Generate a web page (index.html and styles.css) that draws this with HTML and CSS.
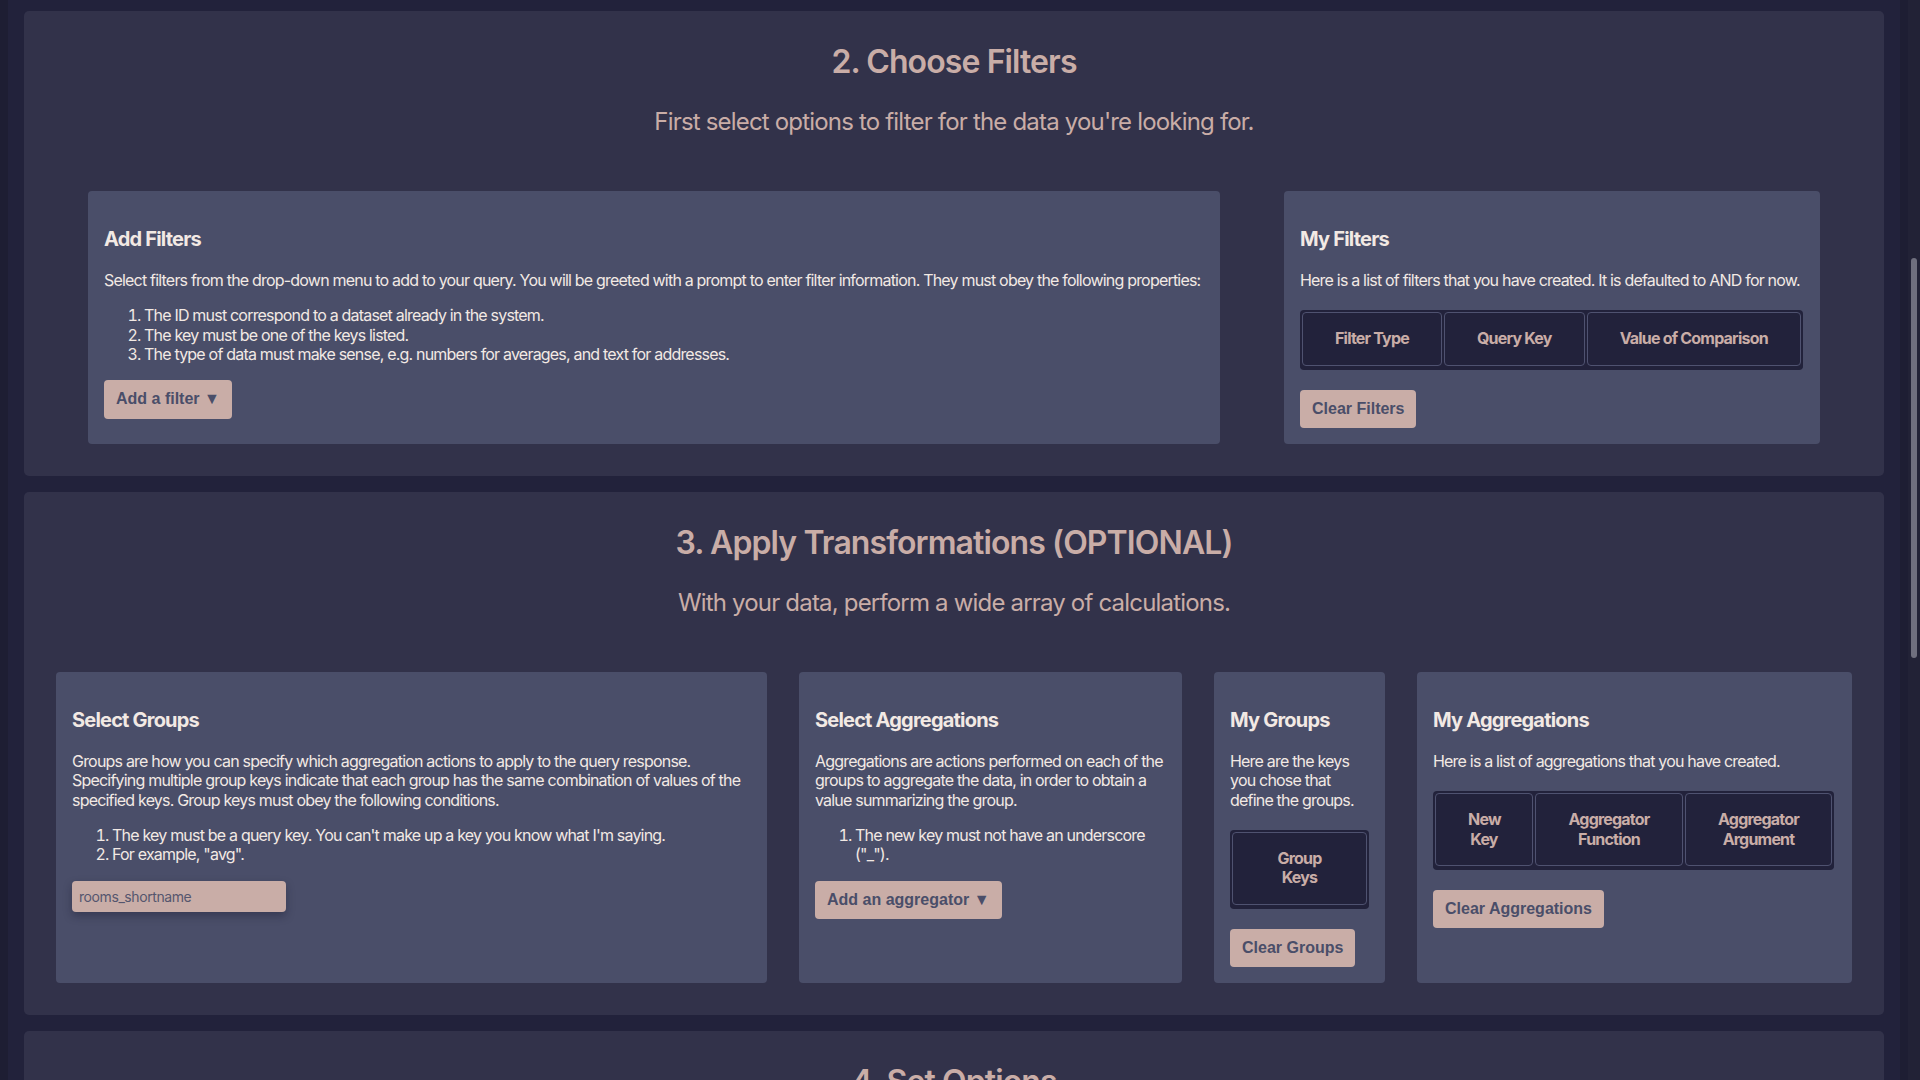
FILE: index.html
```html
<!DOCTYPE html>
<html lang="en">
<head>
<meta charset="utf-8">
<title>Query Builder</title>
<link rel="stylesheet" href="styles.css">
</head>
<body>
<div class="page">
  <section class="step">
    <h2 class="step-title">2. Choose Filters</h2>
    <p class="step-sub">First select options to filter for the data you're looking for.</p>
    <div class="row row-filters">
      <div class="card card-addfilters">
        <h3>Add Filters</h3>
        <p class="one-line">Select filters from the drop-down menu to add to your query. You will be greeted with a prompt to enter filter information. They must obey the following properties:</p>
        <ol>
          <li>The ID must correspond to a dataset already in the system.</li>
          <li>The key must be one of the keys listed.</li>
          <li>The type of data must make sense, e.g. numbers for averages, and text for addresses.</li>
        </ol>
        <button class="btn">Add a filter ▼</button>
      </div>
      <div class="card card-myfilters">
        <h3>My Filters</h3>
        <p class="one-line">Here is a list of filters that you have created. It is defaulted to AND for now.</p>
        <table class="tbl tbl-nowrap">
          <tr><th>Filter Type</th><th>Query Key</th><th>Value of Comparison</th></tr>
        </table>
        <button class="btn">Clear Filters</button>
      </div>
    </div>
  </section>

  <section class="step">
    <h2 class="step-title">3. Apply Transformations (OPTIONAL)</h2>
    <p class="step-sub">With your data, perform a wide array of calculations.</p>
    <div class="row row-trans">
      <div class="card card-groups">
        <h3>Select Groups</h3>
        <p>Groups are how you can specify which aggregation actions to apply to the query response. Specifying multiple group keys indicate that each group has the same combination of values of the specified keys. Group keys must obey the following conditions.</p>
        <ol>
          <li>The key must be a query key. You can't make up a key you know what I'm saying.</li>
          <li>For example, "avg".</li>
        </ol>
        <input class="field" type="text" placeholder="rooms_shortname">
      </div>
      <div class="card card-aggs">
        <h3>Select Aggregations</h3>
        <p>Aggregations are actions performed on each of the groups to aggregate the data, in order to obtain a value summarizing the group.</p>
        <ol>
          <li>The new key must not have an underscore ("_").</li>
        </ol>
        <button class="btn">Add an aggregator ▼</button>
      </div>
      <div class="card card-mygroups">
        <h3>My Groups</h3>
        <p>Here are the keys you chose that define the groups.</p>
        <table class="tbl">
          <tr><th>Group Keys</th></tr>
        </table>
        <button class="btn">Clear Groups</button>
      </div>
      <div class="card card-myaggs">
        <h3>My Aggregations</h3>
        <p>Here is a list of aggregations that you have created.</p>
        <table class="tbl tbl-fixed">
          <tr><th class="c-newkey">New Key</th><th class="c-afunc">Aggregator Function</th><th class="c-aarg">Aggregator Argument</th></tr>
        </table>
        <button class="btn">Clear Aggregations</button>
      </div>
    </div>
  </section>

  <section class="step">
    <h2 class="step-title">4. Set Options</h2>
  </section>
</div>
<div class="scrollbar"><div class="thumb"></div></div>
</body>
</html>
```
FILE: styles.css
```css
html {
  background: #1e1e33;
}
body {
  margin: 0;
  height: 1080px;
  overflow: hidden;
  display: flex;
  font-family: "Inter", "Noto Sans", sans-serif;
  color: #f2e9e4;
  font-size: 16px;
  line-height: 1.21;
}
.page {
  flex: 1;
  margin: 0 8px;
  background: #22223b;
  padding: 11px 16px 0;
  overflow: hidden;
}
.scrollbar {
  width: 12px;
  background: #222236;
  display: flex;
  flex-direction: column;
}
.thumb {
  margin: 258px 0 0 3px;
  width: 6px;
  height: 400px;
  border-radius: 3px;
  background: #6f6f7e;
}
.step {
  background: #32324a;
  border-radius: 5px;
  padding: 32px 32px 32px;
  margin-bottom: 16px;
}
.step-title {
  margin: 0;
  text-align: center;
  font-size: 32px;
  font-weight: 600;
  color: #c9ada7;
  letter-spacing: -0.028em;
}
.step-sub {
  margin: 25px 0 55px;
  text-align: center;
  font-size: 24px;
  color: #c9ada7;
  letter-spacing: -0.034em;
}
.row {
  display: flex;
  align-items: stretch;
}
.row-filters {
  justify-content: space-around;
}
.row-trans {
  gap: 32px;
}
.card {
  background: #4a4e69;
  border-radius: 4px;
  padding: 16px;
  box-sizing: border-box;
  letter-spacing: -0.05em;
}
.card h3 {
  margin: 20px 0;
  font-size: 20px;
  font-weight: 700;
  color: #f2e9e4;
}
.card p {
  margin: 16px 0;
}
.card p.one-line {
  white-space: nowrap;
}
.card ol {
  margin: 16px 0;
  padding-left: 40px;
}
.card-addfilters { width: 1132px; }
.card-myfilters { width: 536px; }
.card-groups { width: 711px; }
.card-aggs { width: 383px; }
.card-mygroups { width: 171px; }
.card-myaggs { width: 435px; }

.btn {
  display: block;
  border: none;
  border-radius: 4px;
  background: #c9ada7;
  color: #4a4e69;
  font-family: "Liberation Sans", Arial, sans-serif;
  font-weight: 700;
  font-size: 16px;
  line-height: 18.4px;
  padding: 10px 12px;
  letter-spacing: 0;
}
.field {
  display: block;
  width: 214px;
  height: 31px;
  box-sizing: border-box;
  border: none;
  border-radius: 4px;
  background: #c9ada7;
  padding: 0 7px;
  font-family: "Inter", sans-serif;
  font-size: 14px;
  letter-spacing: -0.03em;
  box-shadow: 0 4px 8px rgba(20, 20, 40, 0.35);
}
.field::placeholder {
  color: #55566e;
}
.tbl {
  background: #22223b;
  border-radius: 4px;
  border-spacing: 2px;
  border-bottom: 2px solid #22223b;
  margin: 20px 0;
}
.tbl th {
  border: 1px solid #4f5270;
  border-radius: 4px;
  padding: 16px 32px;
  font-weight: 700;
  color: #c9ada7;
  text-align: center;
}
.tbl-nowrap th {
  white-space: nowrap;
}
.tbl-fixed {
  table-layout: fixed;
  width: 401px;
}
.tbl-fixed th {
  box-sizing: border-box;
  padding-left: 8px;
  padding-right: 8px;
}
.tbl-fixed th.c-newkey {
  width: 98px;
  padding-left: 32px;
  padding-right: 32px;
}
.tbl-fixed th.c-afunc { width: 148px; }
.tbl-fixed th.c-aarg { width: 147px; }
```
